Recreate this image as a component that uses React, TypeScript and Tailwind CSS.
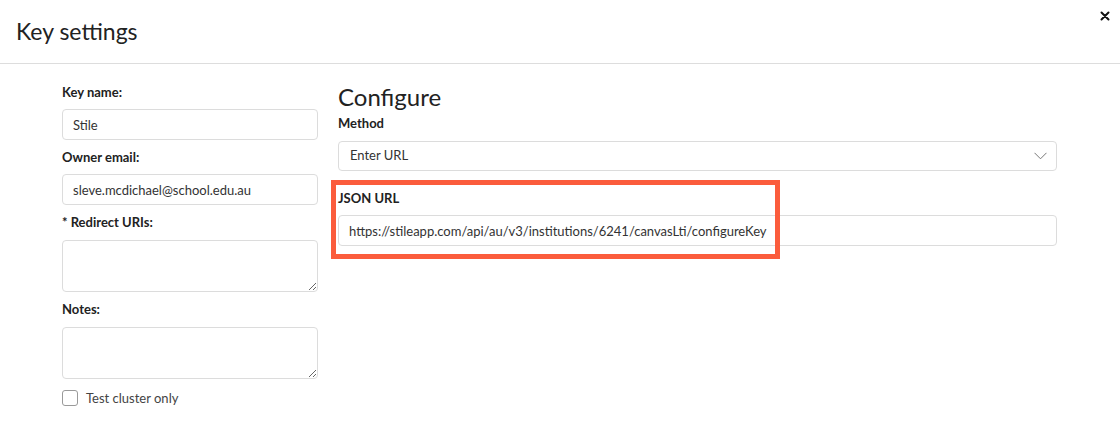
import React from "react";

export default function App() {
  const inputCls =
    "block w-full h-[31px] rounded-[4px] border border-[#dcdcdc] bg-white pl-[10px] text-[13px] text-[#333] outline-none font-['Lato',sans-serif]";
  const labelCls = "block text-[13px] leading-[18px] font-bold text-[#222]";
  return (
    <div className="relative w-[1120px] h-[425px] bg-white overflow-hidden font-['Lato',sans-serif] text-[#222]">
      {/* Header */}
      <div className="h-[64px] border-b border-[#dddddd] flex items-start justify-between">
        <h1 className="pl-4 pt-[17px] text-[23px] leading-[28px] font-normal text-[#222]">
          Key settings
        </h1>
        <button className="mt-[11px] mr-[10px] w-[10px] h-[10px] flex items-center justify-center">
          <svg width="10" height="10" viewBox="0 0 10 10">
            <path d="M1.5 1.5 L8.5 8.5 M8.5 1.5 L1.5 8.5" stroke="#111" strokeWidth="2" strokeLinecap="round" />
          </svg>
        </button>
      </div>

      {/* Body */}
      <div className="grid grid-cols-[256px_1fr] gap-x-5 pl-[62px] pr-[63px] pt-[19px]">
        {/* Left column */}
        <div className="flex flex-col">
          <label className={`${labelCls} mb-2`}>Key name:</label>
          <input className={inputCls} defaultValue="Stile" readOnly />
          <label className={`${labelCls} mt-2 mb-2`}>Owner email:</label>
          <input className={inputCls} defaultValue="sleve.mcdichael@school.edu.au" readOnly />
          <label className={`${labelCls} mt-2 mb-[9px]`}>* Redirect URIs:</label>
          <textarea className="block w-full h-[52px] rounded-[4px] border border-[#dcdcdc] bg-white resize-y outline-none" />
          <label className={`${labelCls} mt-2 mb-[9px]`}>Notes:</label>
          <textarea className="block w-full h-[52px] rounded-[4px] border border-[#dcdcdc] bg-white resize-y outline-none" />
          <div className="mt-[10px] flex items-center gap-2">
            <span className="w-4 h-4 rounded-[3px] border border-[#9a9a9a] bg-white" />
            <span className="text-[13px] leading-[18px] text-[#444]">Test cluster only</span>
          </div>
        </div>

        {/* Right column */}
        <div className="flex flex-col">
          <h2 className="-mt-[1px] text-[24px] leading-[29px] font-normal text-[#222]">Configure</h2>
          <label className={`${labelCls} mt-[3px] mb-[9px]`}>Method</label>
          <div className="h-[30px] rounded-[4px] border border-[#dcdcdc] bg-white flex items-center justify-between pl-[11px] pr-[9px]">
            <span className="text-[13px] text-[#333]">Enter URL</span>
            <svg width="13" height="8" viewBox="0 0 13 8">
              <path d="M0.5 0.8 L6.5 6.8 L12.5 0.8" fill="none" stroke="#777" strokeWidth="1" />
            </svg>
          </div>
          <label className={`${labelCls} mt-[18px] mb-2`}>JSON URL</label>
          <input
            className={inputCls}
            defaultValue="https://stileapp.com/api/au/v3/institutions/6241/canvasLti/configureKey"
            readOnly
          />
        </div>
      </div>

      {/* Annotation highlight */}
      <div className="absolute left-[331px] top-[180px] w-[449px] h-[79px] border-[5px] border-[#fb5c3c] pointer-events-none" />
    </div>
  );
}
